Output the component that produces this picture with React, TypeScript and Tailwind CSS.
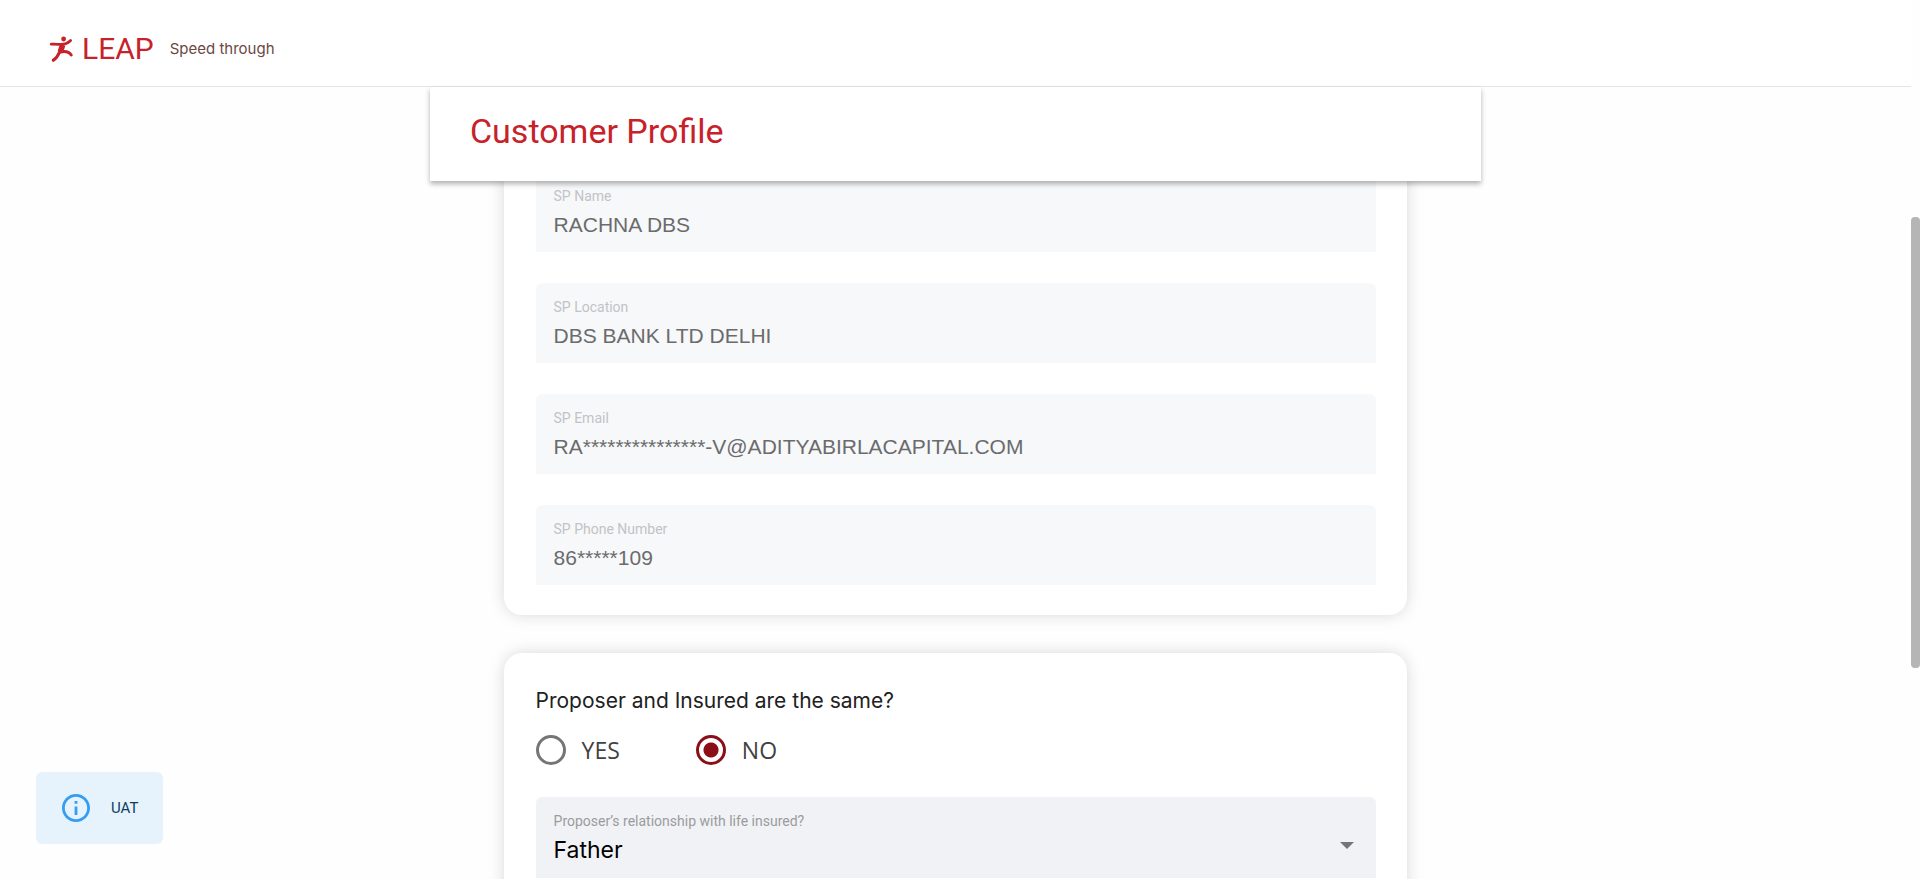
import React, { useState } from "react";

const fields = [
  { id: "sp-name", label: "SP Name", value: "RACHNA DBS" },
  { id: "sp-location", label: "SP Location", value: "DBS BANK LTD DELHI" },
  { id: "sp-email", label: "SP Email", value: "RA***************-V@ADITYABIRLACAPITAL.COM" },
  { id: "sp-phone", label: "SP Phone Number", value: "86*****109" },
];

function Runner() {
  return (
    <svg viewBox="0 0 24 26" className="h-[26px] w-6" fill="none" stroke="#c7222a" strokeLinecap="round" strokeLinejoin="round" aria-hidden="true">
      <circle cx="14.6" cy="3" r="2.4" fill="#c7222a" stroke="none" />
      <path d="M2.2 8.2C7 8 9 8.4 12 8.4C16 8.4 19 7 21.6 4.4" strokeWidth="2.8" />
      <path d="M13.6 9L11.4 15.6" strokeWidth="5.6" strokeLinecap="butt" />
      <path d="M11 15C9.4 19 7.6 22.2 4.4 24.2" strokeWidth="3.2" />
      <path d="M11.4 16C16 14.8 20 15.8 22.2 19" strokeWidth="3" />
    </svg>
  );
}

function ReadOnlyField({ id, label, value }: { id: string; label: string; value: string }) {
  return (
    <div className="flex h-20 flex-col rounded-t-md bg-[#f7f8fa] px-[18px] pt-[14px]">
      <label htmlFor={id} className="font-[Roboto] text-sm leading-5 text-[#c2c3c5]">
        {label}
      </label>
      <input
        id={id}
        defaultValue={value}
        disabled
        className="h-[38px] w-full bg-transparent font-['Liberation_Sans',sans-serif] text-[21px] leading-[38px] text-[#6b6b6c]"
      />
    </div>
  );
}

function RadioOption({ label, checked, onChange }: { label: string; checked: boolean; onChange: () => void }) {
  return (
    <label className="flex items-center gap-4 font-['Open_Sans',sans-serif] text-[23px] leading-[30px] text-[#424242]">
      <input
        type="radio"
        name="same-person"
        checked={checked}
        onChange={onChange}
        className="size-[30px] appearance-none rounded-full border-3 border-[#757575] checked:border-[#8b0f17] checked:bg-[radial-gradient(circle,#8b0f17_7px,transparent_8px)]"
      />
      {label}
    </label>
  );
}

export default function App() {
  const [same, setSame] = useState("NO");
  return (
    <div className="flex h-screen overflow-hidden bg-[#fefefe]">
      <div className="flex min-w-0 flex-1 flex-col">
        <header className="flex h-[87px] shrink-0 items-center border-b border-[#e2e5ec] bg-white pt-[11px] pl-[49px]">
          <a href="#" className="flex items-center gap-[9px]">
            <Runner />
            <span className="font-[Roboto] text-[30px] leading-9 text-[#c7222a]">LEAP</span>
          </a>
          <span className="pl-4 font-[Inter] text-[15px] leading-6 text-[#6b4744]">Speed through</span>
        </header>
        <main className="mx-auto flex min-h-0 w-[55%] flex-1 flex-col">
          <div className="z-10 flex h-[94px] shrink-0 items-start bg-white px-10 pt-6 shadow-[0_3px_5px_rgba(0,0,0,0.3)]">
            <h1 className="font-[Roboto] text-[34px] leading-10 text-[#c7222a]">Customer Profile</h1>
          </div>
          <div className="mx-auto -mt-[9px] flex w-[86%] flex-col gap-[38px]">
            <section className="flex flex-col gap-[31px] rounded-b-[18px] bg-white pr-[31px] pb-[30px] pl-8 shadow-[0_0_16px_rgba(0,0,0,0.15)]">
              {fields.map((f) => (
                <ReadOnlyField key={f.id} {...f} />
              ))}
            </section>
            <section className="rounded-t-[18px] bg-white pt-8 pr-[31px] pb-8 pl-8 shadow-[0_0_16px_rgba(0,0,0,0.15)]">
              <fieldset>
                <legend className="font-[Inter] text-[21px] leading-8 text-[#212121]">Proposer and Insured are the same?</legend>
                <div className="flex gap-[76px] pt-[18px]">
                  <RadioOption label="YES" checked={same === "YES"} onChange={() => setSame("YES")} />
                  <RadioOption label="NO" checked={same === "NO"} onChange={() => setSame("NO")} />
                </div>
              </fieldset>
              <div className="relative mt-8 flex h-[81px] flex-col rounded-t-md bg-[#f1f2f6] pt-[14px]">
                <label htmlFor="relationship" className="px-[18px] font-[Roboto] text-sm leading-5 text-[#9b9b9d]">
                  Proposer’s relationship with life insured?
                </label>
                <select
                  id="relationship"
                  defaultValue="Father"
                  className="h-[38px] w-full appearance-none bg-transparent px-[18px] font-[Inter] text-[23px] leading-[38px] text-black"
                >
                  <option>Father</option>
                  <option>Mother</option>
                  <option>Spouse</option>
                </select>
                <svg viewBox="0 0 14 7" className="pointer-events-none absolute top-[45px] right-[22px] h-[7px] w-[14px]" fill="#757575" aria-hidden="true">
                  <path d="M0 0H14L7 7Z" />
                </svg>
              </div>
            </section>
          </div>
        </main>
      </div>
      <div className="w-[9px] shrink-0 pt-[217px]" aria-hidden="true">
        <div className="h-[451px] rounded bg-[#b5b5b5]" />
      </div>
      <div role="status" className="fixed bottom-[35px] left-9 z-20 flex h-[72px] w-[127px] items-center gap-[21px] rounded-md bg-[#e6f3fd] pl-[26px]">
        <svg viewBox="2 2 20 20" className="size-7" fill="#349df2" aria-hidden="true">
          <path d="M11 7h2v2h-2zM11 11h2v6h-2zM12 2C6.48 2 2 6.48 2 12s4.48 10 10 10 10-4.48 10-10S17.52 2 12 2zm0 18c-4.41 0-8-3.59-8-8s3.59-8 8-8 8 3.59 8 8-3.59 8-8 8z" />
        </svg>
        <span className="font-[Roboto] text-[15px] leading-6 text-[#0d3c61]">UAT</span>
      </div>
    </div>
  );
}
